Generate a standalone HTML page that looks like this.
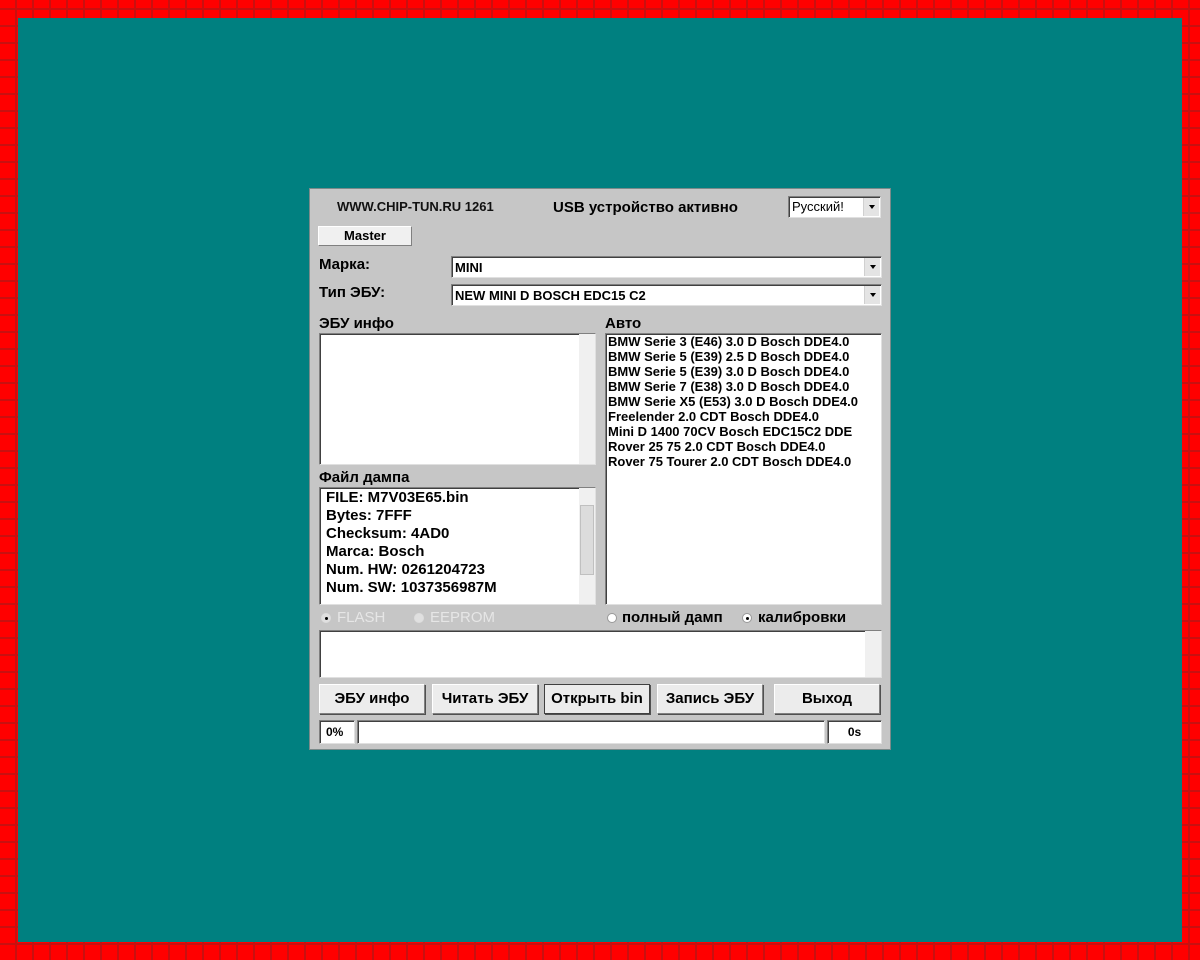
<!DOCTYPE html>
<html><head><meta charset="utf-8"><style>
*{margin:0;padding:0;box-sizing:border-box}
body{width:1200px;height:960px;position:relative;overflow:hidden;background:#f00;
background-image:repeating-linear-gradient(90deg,transparent 0 15px,#c81010 15px 17px),repeating-linear-gradient(0deg,transparent 0 15px,#c81010 15px 17px);
font-family:"Liberation Sans","Noto Sans CJK SC",sans-serif;}
.teal{position:absolute;left:18px;top:18px;width:1164px;height:924px;background:#008080;}
.dlg{position:absolute;left:309px;top:188px;width:582px;height:562px;background:#c6c6c6;border:1px solid #7a8a8a;}
.a{position:absolute;}
.b{font-weight:bold;}
.box{position:absolute;background:#fff;border:1px solid #808080;border-right-color:#e0e0e0;border-bottom-color:#e0e0e0;box-shadow:inset 1px 1px 0 #404040;}
.arr{position:absolute;right:1px;top:1px;bottom:1px;width:16px;background:#e4e4e4;border-left:1px solid #d0d0d0;}
.arr:after{content:"";position:absolute;left:5px;top:50%;margin-top:-2px;border:3px solid transparent;border-top:4px solid #000;}
.btn{position:absolute;height:30px;background:#ececec;border:1px solid #fff;border-right-color:#808080;border-bottom-color:#808080;box-shadow:1px 1px 0 #505050;font-weight:bold;font-size:15px;text-align:center;line-height:28px;}
.sb{position:absolute;right:0;top:0;bottom:0;width:16px;background:#f0f0f0;}
.r{position:absolute;width:10px;height:10px;border-radius:50%;background:#fff;border:1px solid #999;}
.r.on:after{content:"";position:absolute;left:3px;top:3px;width:3px;height:3px;border-radius:50%;background:#000;}
</style></head><body>
<div class="teal"></div>
<div class="dlg">
 <div class="a" style="left:27px;top:10px;font-size:13px;color:#111;font-weight:600">WWW.CHIP-TUN.RU 1261</div>
 <div class="a b" style="left:243px;top:10px;font-size:15px;">USB устройство активно</div>
 <div class="box" style="left:478px;top:7px;width:93px;height:22px;font-size:13px;padding:2px 3px;">Русский!<div class="arr"></div></div>
 <div class="a" style="left:8px;top:37px;width:94px;height:20px;background:#f0f0f0;border:1px solid #fff;border-right-color:#808080;border-bottom-color:#808080;font-size:13px;font-weight:bold;text-align:center;line-height:18px;">Master</div>
 <div class="a b" style="left:9px;top:67px;font-size:15px;">Марка:</div>
 <div class="box" style="left:141px;top:67px;width:431px;height:22px;font-size:13px;font-weight:bold;padding:3px 3px;">MINI<div class="arr"></div></div>
 <div class="a b" style="left:9px;top:95px;font-size:15px;">Тип ЭБУ:</div>
 <div class="box" style="left:141px;top:95px;width:431px;height:22px;font-size:13px;font-weight:bold;padding:3px 3px;">NEW MINI D BOSCH EDC15 C2<div class="arr"></div></div>
 <div class="a b" style="left:9px;top:126px;font-size:15px;">ЭБУ инфо</div>
 <div class="box" style="left:9px;top:144px;width:277px;height:132px;"><div class="sb"></div></div>
 <div class="a b" style="left:295px;top:126px;font-size:15px;">Авто</div>
 <div class="box" style="left:295px;top:144px;width:277px;height:272px;font-size:13px;font-weight:bold;line-height:15px;padding:0 2px;white-space:nowrap;">BMW Serie 3 (E46) 3.0 D Bosch DDE4.0<br>BMW Serie 5 (E39) 2.5 D Bosch DDE4.0<br>BMW Serie 5 (E39) 3.0 D Bosch DDE4.0<br>BMW Serie 7 (E38) 3.0 D Bosch DDE4.0<br>BMW Serie X5 (E53) 3.0 D Bosch DDE4.0<br>Freelender 2.0 CDT Bosch DDE4.0<br>Mini D 1400 70CV Bosch EDC15C2 DDE<br>Rover 25 75 2.0 CDT Bosch DDE4.0<br>Rover 75 Tourer 2.0 CDT Bosch DDE4.0</div>
 <div class="a b" style="left:9px;top:280px;font-size:15px;">Файл дампа</div>
 <div class="box" style="left:9px;top:298px;width:277px;height:118px;font-size:15px;font-weight:bold;line-height:18px;padding:1px 6px;">FILE: M7V03E65.bin<br>Bytes: 7FFF<br>Checksum: 4AD0<br>Marca: Bosch<br>Num. HW: 0261204723<br>Num. SW: 1037356987M<div class="sb"><div style="position:absolute;left:1px;top:17px;width:14px;height:70px;background:#dcdcdc;border:1px solid #c0c0c0"></div></div></div>
 <div class="r on" style="left:11px;top:424px;background:#e0e0e0;border-color:#ddd"></div>
 <div class="a" style="left:27px;top:420px;font-size:15px;color:#e6e6e6;">FLASH</div>
 <div class="r" style="left:104px;top:424px;background:#e0e0e0;border-color:#ddd"></div>
 <div class="a" style="left:120px;top:420px;font-size:15px;color:#e6e6e6;">EEPROM</div>
 <div class="r" style="left:297px;top:424px;"></div>
 <div class="a b" style="left:312px;top:420px;font-size:15px;">полный дамп</div>
 <div class="r on" style="left:432px;top:424px;"></div>
 <div class="a b" style="left:448px;top:420px;font-size:15px;">калибровки</div>
 <div class="box" style="left:9px;top:441px;width:563px;height:48px;"><div class="sb"></div></div>
 <div class="btn" style="left:9px;top:495px;width:106px;">ЭБУ инфо</div>
 <div class="btn" style="left:122px;top:495px;width:106px;">Читать ЭБУ</div>
 <div class="btn" style="left:234px;top:495px;width:106px;border:1px solid #404040;">Открыть bin</div>
 <div class="btn" style="left:347px;top:495px;width:106px;">Запись ЭБУ</div>
 <div class="btn" style="left:464px;top:495px;width:106px;">Выход</div>
 <div class="box" style="left:9px;top:531px;width:36px;height:24px;font-size:12px;font-weight:bold;padding:4px 6px;">0%</div>
 <div class="box" style="left:47px;top:531px;width:468px;height:24px;"></div>
 <div class="box" style="left:517px;top:531px;width:55px;height:24px;font-size:12px;font-weight:bold;padding:4px 0;text-align:center;">0s</div>
</div>
</body></html>
